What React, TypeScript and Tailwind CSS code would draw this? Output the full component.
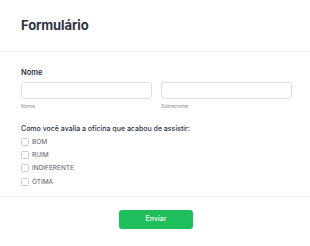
import React from "react";

export default function App() {
  const opts = ["BOM", "RUIM", "INDIFERENTE", "ÓTIMA"];
  return (
    <div className="w-[310px] h-[246px] bg-white overflow-hidden" style={{ fontFamily: "Inter, 'Noto Sans', sans-serif" }}>
      <div className="h-[52px] border-b border-[#efefef] pl-[21px] pt-[16px]">
        <h1 className="text-[13px] leading-[18px] font-bold text-[#2c3345] tracking-[-0.1px]">Formulário</h1>
      </div>
      <div className="pl-[21px] pr-[18px] pt-[16px] h-[145px] border-b border-[#efefef]">
        <div className="text-[7.5px] leading-[10px] font-semibold text-[#2c3345]">Nome</div>
        <div className="mt-[4px] grid grid-cols-2 gap-[9px]">
          <div>
            <div className="h-[17px] border border-[#dcdfe6] rounded-[3px] bg-white" />
            <div className="mt-[4px] text-[5px] leading-[7px] text-[#8a8f99]">Nome</div>
          </div>
          <div>
            <div className="h-[17px] border border-[#dcdfe6] rounded-[3px] bg-white" />
            <div className="mt-[4px] text-[5px] leading-[7px] text-[#8a8f99]">Sobrenome</div>
          </div>
        </div>
        <div className="mt-[14px] text-[7px] leading-[10px] font-medium text-[#2c3345]">
          Como você avalia a oficina que acabou de assistir:
        </div>
        <div className="mt-[1px] flex flex-col">
          {opts.map((o) => (
            <div key={o} className="h-[13.3px] flex items-center gap-[3px]">
              <div className="w-[8px] h-[8px] border border-[#c9ccd3] rounded-[1.5px] bg-white" />
              <span className="text-[6.5px] leading-[8px] text-[#555a66]">{o}</span>
            </div>
          ))}
        </div>
      </div>
      <div className="flex justify-center pt-[13px] pl-[2px]">
        <button className="w-[74px] h-[19px] rounded-[3px] bg-[#1ebe5d] text-white text-[7px] font-medium">
          Enviar
        </button>
      </div>
    </div>
  );
}
